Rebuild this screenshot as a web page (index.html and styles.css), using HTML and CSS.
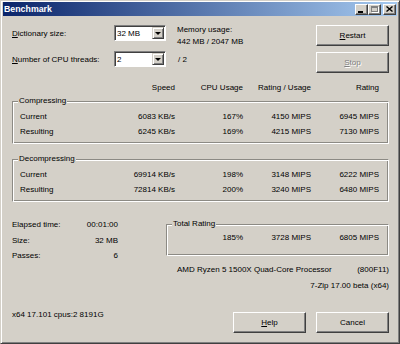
FILE: index.html
```html
<!DOCTYPE html>
<html lang="en">
<head>
    <meta charset="UTF-8">
    <title>Benchmark</title>
    <link rel="stylesheet" href="styles.css">
</head>
<body>
<div class="window">
    <div class="titlebar">
        <div class="title">Benchmark</div>
        <div class="caption-btns">
            <div class="cbtn min"><span></span></div>
            <div class="cbtn max"><span></span></div>
            <div class="cbtn close">
                <svg width="7" height="6" viewBox="0 0 7 6"><path d="M0.5 0.5 L6.5 5.5 M6.5 0.5 L0.5 5.5" stroke="#000" stroke-width="1.4"/></svg>
            </div>
        </div>
    </div>

    <div class="client">
        <div class="top">
            <div class="settings">
                <div class="set-line">
                    <span class="set-label"><u>D</u>ictionary size:</span>
                    <div class="combo"><span class="combo-val">32 MB</span><span class="drop"></span></div>
                    <div class="mem">Memory usage:<br>442 MB / 2047 MB</div>
                </div>
                <div class="set-line">
                    <span class="set-label"><u>N</u>umber of CPU threads:</span>
                    <div class="combo"><span class="combo-val">2</span><span class="drop"></span></div>
                    <span class="threads">/ 2</span>
                </div>
            </div>
            <div class="actions">
                <button class="btn"><u>R</u>estart</button>
                <button class="btn" disabled><u>S</u>top</button>
            </div>
        </div>

        <div class="cols head">
            <span></span><span>Speed</span><span>CPU Usage</span><span>Rating / Usage</span><span>Rating</span>
        </div>

        <fieldset class="group">
            <legend>Compressing</legend>
            <div class="cols row">
                <span>Current</span><span>6083 KB/s</span><span>167%</span><span>4150 MIPS</span><span>6945 MIPS</span>
            </div>
            <div class="cols row">
                <span>Resulting</span><span>6245 KB/s</span><span>169%</span><span>4215 MIPS</span><span>7130 MIPS</span>
            </div>
        </fieldset>

        <fieldset class="group decomp">
            <legend>Decompressing</legend>
            <div class="cols row">
                <span>Current</span><span>69914 KB/s</span><span>198%</span><span>3148 MIPS</span><span>6222 MIPS</span>
            </div>
            <div class="cols row">
                <span>Resulting</span><span>72814 KB/s</span><span>200%</span><span>3240 MIPS</span><span>6480 MIPS</span>
            </div>
        </fieldset>

        <div class="bottom">
            <div class="stats">
                <span>Elapsed time:</span><span>00:01:00</span>
                <span>Size:</span><span>32 MB</span>
                <span>Passes:</span><span>6</span>
            </div>
            <fieldset class="group total">
                <legend>Total Rating</legend>
                <div class="cols row">
                    <span></span><span>185%</span><span>3728 MIPS</span><span>6805 MIPS</span>
                </div>
            </fieldset>
        </div>

        <div class="cpu">
            <div class="cpu-line"><span>AMD Ryzen 5 1500X Quad-Core Processor</span><span>(800F11)</span></div>
            <div class="cpu-ver">7-Zip 17.00 beta (x64)</div>
        </div>

        <div class="footer">
            <div class="build">x64 17.101 cpus:2 8191G</div>
            <div class="footer-btns">
                <button class="btn"><u>H</u>elp</button>
                <button class="btn">Cancel</button>
            </div>
        </div>
    </div>
</div>
</body>
</html>
```

FILE: styles.css
```css
*{
    margin: 0;
    padding: 0;
    box-sizing: border-box;
}
body{
    font-family: "Liberation Sans", Arial, sans-serif;
    font-size: 8px;
    color: #000;
    background: #d4d0c8;
}
.window{
    width: 400px;
    height: 344px;
    display: flex;
    flex-direction: column;
    background: #d4d0c8;
    border: 1px solid;
    border-color: #d4d0c8 #404040 #404040 #d4d0c8;
    box-shadow: inset 1px 1px #fff, inset -1px -1px #808080;
    padding: 1px 2px 2px 2px;
}

/* title bar */
.titlebar{
    height: 14px;
    display: flex;
    align-items: center;
    justify-content: space-between;
    padding: 0 1px 0 1px;
    background: linear-gradient(to right, #0a246a, #a6caf0);
}
.title{
    color: #fff;
    font-weight: bold;
    font-size: 8.8px;
}
.caption-btns{
    display: flex;
}
.cbtn{
    width: 13px;
    height: 11px;
    display: flex;
    align-items: center;
    justify-content: center;
    background: #d4d0c8;
    border: 1px solid;
    border-color: #fff #404040 #404040 #fff;
    box-shadow: inset -1px -1px #808080;
}
.cbtn.close{
    margin-left: 2px;
}
.min span{
    width: 5px;
    height: 2px;
    background: #000;
    margin: 5px 3px 0 0;
}
.max span{
    width: 7px;
    height: 6px;
    border: 1px solid #808080;
    border-top-width: 2px;
    box-shadow: 1px 1px #fff;
}

/* client */
.client{
    flex: 1;
    display: flex;
    flex-direction: column;
    padding: 9px 8px 8px 9px;
}
.top{
    display: flex;
    justify-content: space-between;
    height: 48px;
}
.settings{
    display: flex;
    flex-direction: column;
    gap: 10px;
}
.set-line{
    display: flex;
    align-items: center;
    height: 16px;
}
.set-label{
    width: 102px;
}
.combo{
    width: 52px;
    height: 16px;
    display: flex;
    align-items: center;
    background: #fff;
    border: 1px solid;
    border-color: #808080 #fff #fff #808080;
    box-shadow: inset 1px 1px #404040;
}
.combo-val{
    flex: 1;
    padding-left: 2px;
}
.drop{
    width: 12px;
    height: 12px;
    margin-right: 1px;
    display: flex;
    align-items: center;
    justify-content: center;
    background: #d4d0c8;
    border: 1px solid;
    border-color: #d4d0c8 #404040 #404040 #d4d0c8;
    box-shadow: inset 1px 1px #fff, inset -1px -1px #808080;
}
.drop::after{
    content: "";
    border-left: 3px solid transparent;
    border-right: 3px solid transparent;
    border-top: 3px solid #000;
    margin-top: 1px;
}
.mem{
    align-self: flex-start;
    margin: -1px 0 0 11px;
    line-height: 12px;
}
.threads{
    margin-left: 12px;
}
.actions{
    display: flex;
    flex-direction: column;
    gap: 6px;
}
.btn{
    width: 73px;
    height: 21px;
    font: inherit;
    color: #000;
    background: #d4d0c8;
    border: 1px solid;
    border-color: #fff #404040 #404040 #fff;
    box-shadow: inset -1px -1px #808080;
}
.btn:disabled{
    color: #808080;
    text-shadow: 1px 1px #fff;
}

/* tables */
.cols{
    display: grid;
    grid-template-columns: 1fr repeat(4, 68px);
}
.cols span{
    text-align: right;
    white-space: nowrap;
}
.cols span:first-child{
    text-align: left;
}
.head{
    margin-top: 8px;
    padding-right: 10px;
    line-height: 13px;
}
.group{
    margin-top: 2px;
    padding: 3px 9px 4px 7px;
    border: 1px solid;
    border-color: #8c8a84 #fff #fff #8c8a84;
    box-shadow: inset 1px 1px #fff, inset -1px -1px #8c8a84;
}
.group legend{
    line-height: 10px;
    padding: 0 1px;
    margin-left: -2px;
    background: #d4d0c8;
}
.row{
    line-height: 15px;
}
.decomp{
    margin-top: 10px;
}

/* bottom */
.bottom{
    display: flex;
    align-items: flex-start;
    margin-top: 13px;
}
.stats{
    width: 106px;
    margin-top: 2px;
    display: grid;
    grid-template-columns: 1fr auto;
    line-height: 15.7px;
}
.stats span:nth-child(2n){
    text-align: right;
}
.total{
    width: 223px;
    margin: 4px 0 0 auto;
    padding: 1px 9px 10px 0;
}
.total legend{
    margin-left: 5px;
}
.total .cols{
    grid-template-columns: 1fr repeat(3, 68px);
}
.cpu{
    margin: -2px 0 0 165px;
    line-height: 16px;
}
.cpu-line{
    display: flex;
    justify-content: space-between;
}
.cpu-ver{
    text-align: right;
}
.footer{
    margin-top: auto;
    display: flex;
    align-items: flex-start;
}
.build{
    margin-top: -3px;
    line-height: 12px;
}
.footer-btns{
    margin-left: auto;
    display: flex;
    gap: 10px;
}
```
